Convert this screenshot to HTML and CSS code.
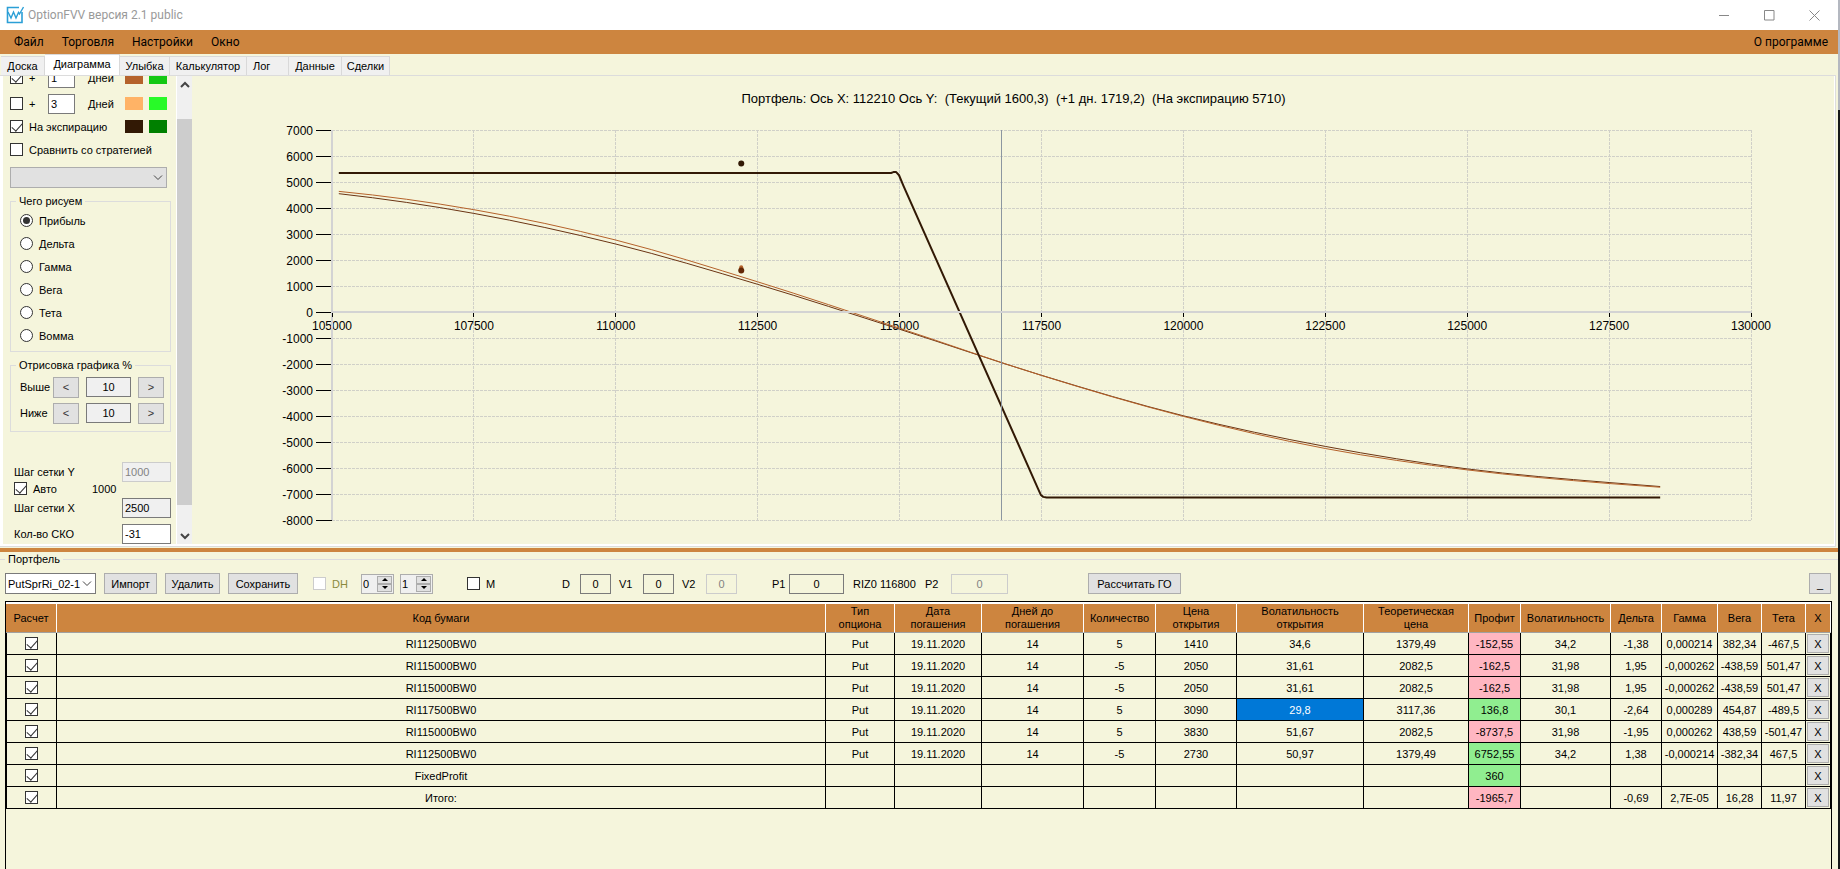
FILE: index.html
```html
<!DOCTYPE html>
<html lang="ru">
<head>
  <meta charset="UTF-8">
  <meta name="viewport" content="width=device-width, initial-scale=1.0">
  <title>OptionFVV версия 2.1 public</title>
  <link rel="stylesheet" href="styles.css">
</head>
<body>
  <div class="window">

    <header class="titlebar">
      <svg class="logo" width="18" height="18" viewBox="0 0 18 18" fill="none" stroke="#2b9fd6">
        <path d="M13 1.5H1.5V16.5H16V6" stroke-width="1.6"/>
        <path d="M2 6L5 12L7.500 6L10 12L12.500 6.500L13.500 8L17.500 1" stroke-width="1.4"/>
      </svg>
      <span class="title">OptionFVV версия 2.1 public</span>
      <div class="win-buttons">
        <button aria-label="Свернуть"><svg width="11" height="11"><path d="M0 5.500H10"/></svg></button>
        <button aria-label="Развернуть"><svg width="11" height="11"><path d="M.5 .5H10V10H.5Z"/></svg></button>
        <button aria-label="Закрыть"><svg width="11" height="11"><path d="M.5 .5L10.500 10.500M10.500 .5L.5 10.500"/></svg></button>
      </div>
    </header>

    <nav class="menu">
      <a href="#">Файл</a>
      <a href="#">Торговля</a>
      <a href="#">Настройки</a>
      <a href="#">Окно</a>
      <a href="#" class="about">О программе</a>
    </nav>

    <div class="tabs">
      <button class="w44">Доска</button>
      <button class="w75 active">Диаграмма</button>
      <button class="w50">Улыбка</button>
      <button class="w77">Калькулятор</button>
      <button class="w42 left">Лог</button>
      <button class="w53">Данные</button>
      <button class="w48">Сделки</button>
    </div>

    <main class="tab-page">
      <aside class="sidebar">
        <div class="options">
          <div class="row first">
            <input type="checkbox" id="plus1" checked><label class="plus" for="plus1">+</label>
            <input type="text" class="days" id="days1" value="1"><label class="days-label" for="days1">Дней</label>
            <i class="swatch c1"></i><i class="swatch c2"></i>
          </div>
          <div class="row">
            <input type="checkbox" id="plus3"><label class="plus" for="plus3">+</label>
            <input type="text" class="days" id="days3" value="3"><label class="days-label" for="days3">Дней</label>
            <i class="swatch c3"></i><i class="swatch c4"></i>
          </div>
          <div class="row">
            <input type="checkbox" id="exp" checked><label class="wide" for="exp">На экспирацию</label>
            <i class="swatch c5"></i><i class="swatch c6"></i>
          </div>
          <div class="row">
            <input type="checkbox" id="cmp"><label for="cmp">Сравнить со стратегией</label>
          </div>
          <div class="select strategy">
            <select aria-label="Стратегия"><option></option></select>
            <svg width="10" height="6"><path d="M1 .5L5 4.500L9 .5"/></svg>
          </div>

          <fieldset class="what">
            <legend>Чего рисуем</legend>
            <label><input type="radio" name="what" checked>Прибыль</label>
            <label><input type="radio" name="what">Дельта</label>
            <label><input type="radio" name="what">Гамма</label>
            <label><input type="radio" name="what">Вега</label>
            <label><input type="radio" name="what">Тета</label>
            <label><input type="radio" name="what">Вомма</label>
          </fieldset>

          <fieldset class="range">
            <legend>Отрисовка графика %</legend>
            <div class="range-row">
              <label for="above">Выше</label><button>&lt;</button><input type="text" id="above" value="10"><button>&gt;</button>
            </div>
            <div class="range-row">
              <label for="below">Ниже</label><button>&lt;</button><input type="text" id="below" value="10"><button>&gt;</button>
            </div>
          </fieldset>

          <div class="steps">
            <div class="step"><label for="stepY">Шаг сетки Y</label><input type="text" id="stepY" value="1000" disabled></div>
            <div class="auto"><input type="checkbox" id="auto" checked><label for="auto">Авто</label><span>1000</span></div>
            <div class="step"><label for="stepX">Шаг сетки X</label><input type="text" class="grey" id="stepX" value="2500"></div>
            <div class="step last"><label for="sko">Кол-во СКО</label><input type="text" id="sko" value="-31"></div>
          </div>
        </div>
        <div class="scrollbar">
          <svg width="10" height="8"><path d="M1 6L5 2L9 6"/></svg>
          <div class="track"><div class="thumb"></div></div>
          <svg width="10" height="8"><path d="M1 2L5 6L9 2"/></svg>
        </div>
      </aside>
      <section class="chart">
        <h1>Портфель: Ось X: 112210 Ось Y: &nbsp;(Текущий 1600,3) &nbsp;(+1 дн. 1719,2) &nbsp;(На экспирацию 5710)</h1>
        <svg id="chart"></svg>
      </section>
    </main>

    <div class="splitter"></div>

    <section class="portfolio">
      <h2>Портфель</h2>
      <div class="toolbar">
        <div class="select strat-name">
          <select aria-label="Портфель"><option>PutSprRi_02-1</option></select>
          <svg width="10" height="6"><path d="M1 .5L5 4.500L9 .5"/></svg>
        </div>
        <button class="w53">Импорт</button>
        <button class="w55">Удалить</button>
        <button class="w70">Сохранить</button>
        <label class="check dh"><input type="checkbox" disabled>DH</label>
        <div class="spin">
          <input type="text" aria-label="DH 1" value="0">
          <span class="arrows"><button aria-label="Больше"></button><button class="down" aria-label="Меньше"></button></span>
        </div>
        <div class="spin">
          <input type="text" aria-label="DH 2" value="1">
          <span class="arrows"><button aria-label="Больше"></button><button class="down" aria-label="Меньше"></button></span>
        </div>
        <label class="check m"><input type="checkbox">M</label>
        <label class="field d">D<input type="text" value="0"></label>
        <label class="field v">V1<input type="text" value="0"></label>
        <label class="field v">V2<input type="text" value="0" disabled></label>
        <label class="field p1">P1<input type="text" value="0"></label>
        <span class="ticker">RIZ0 116800</span>
        <label class="field p2">P2<input type="text" value="0" disabled></label>
        <button class="w93">Рассчитать ГО</button>
        <button class="collapse">_</button>
      </div>

      <div class="grid">
        <table>
          <colgroup>
            <col class="w51"><col><col class="w69"><col class="w87"><col class="w102"><col class="w72"><col class="w81"><col class="w127">
            <col class="w105"><col class="w52"><col class="w90"><col class="w51"><col class="w56"><col class="w44"><col class="w44"><col class="w25">
          </colgroup>
          <thead>
            <tr>
              <th>Расчет</th><th>Код бумаги</th><th>Тип<br>опциона</th><th>Дата<br>погашения</th><th>Дней до<br>погашения</th><th>Количество</th><th>Цена<br>открытия</th><th>Волатильность<br>открытия</th>
              <th>Теоретическая<br>цена</th><th>Профит</th><th>Волатильность</th><th>Дельта</th><th>Гамма</th><th>Вега</th><th>Тета</th><th>X</th>
            </tr>
          </thead>
          <tbody>
            <tr>
              <td><input type="checkbox" aria-label="Расчет" checked></td><td>RI112500BW0</td><td>Put</td><td>19.11.2020</td><td>14</td><td>5</td><td>1410</td><td>34,6</td>
              <td>1379,49</td><td class="minus">-152,55</td><td>34,2</td><td>-1,38</td><td>0,000214</td><td>382,34</td><td>-467,5</td><td><button>X</button></td>
            </tr>
            <tr>
              <td><input type="checkbox" aria-label="Расчет" checked></td><td>RI115000BW0</td><td>Put</td><td>19.11.2020</td><td>14</td><td>-5</td><td>2050</td><td>31,61</td>
              <td>2082,5</td><td class="minus">-162,5</td><td>31,98</td><td>1,95</td><td>-0,000262</td><td>-438,59</td><td>501,47</td><td><button>X</button></td>
            </tr>
            <tr>
              <td><input type="checkbox" aria-label="Расчет" checked></td><td>RI115000BW0</td><td>Put</td><td>19.11.2020</td><td>14</td><td>-5</td><td>2050</td><td>31,61</td>
              <td>2082,5</td><td class="minus">-162,5</td><td>31,98</td><td>1,95</td><td>-0,000262</td><td>-438,59</td><td>501,47</td><td><button>X</button></td>
            </tr>
            <tr>
              <td><input type="checkbox" aria-label="Расчет" checked></td><td>RI117500BW0</td><td>Put</td><td>19.11.2020</td><td>14</td><td>5</td><td>3090</td><td class="selected">29,8</td>
              <td>3117,36</td><td class="profit">136,8</td><td>30,1</td><td>-2,64</td><td>0,000289</td><td>454,87</td><td>-489,5</td><td><button>X</button></td>
            </tr>
            <tr>
              <td><input type="checkbox" aria-label="Расчет" checked></td><td>RI115000BW0</td><td>Put</td><td>19.11.2020</td><td>14</td><td>5</td><td>3830</td><td>51,67</td>
              <td>2082,5</td><td class="minus">-8737,5</td><td>31,98</td><td>-1,95</td><td>0,000262</td><td>438,59</td><td>-501,47</td><td><button>X</button></td>
            </tr>
            <tr>
              <td><input type="checkbox" aria-label="Расчет" checked></td><td>RI112500BW0</td><td>Put</td><td>19.11.2020</td><td>14</td><td>-5</td><td>2730</td><td>50,97</td>
              <td>1379,49</td><td class="profit">6752,55</td><td>34,2</td><td>1,38</td><td>-0,000214</td><td>-382,34</td><td>467,5</td><td><button>X</button></td>
            </tr>
            <tr>
              <td><input type="checkbox" aria-label="Расчет" checked></td><td>FixedProfit</td><td></td><td></td><td></td><td></td><td></td><td></td>
              <td></td><td class="profit">360</td><td></td><td></td><td></td><td></td><td></td><td><button>X</button></td>
            </tr>
            <tr>
              <td><input type="checkbox" aria-label="Расчет" checked></td><td>Итого:</td><td></td><td></td><td></td><td></td><td></td><td></td>
              <td></td><td class="minus">-1965,7</td><td></td><td>-0,69</td><td>2,7E-05</td><td>16,28</td><td>11,97</td><td><button>X</button></td>
            </tr>
          </tbody>
        </table>
      </div>
    </section>
  </div>

  <script src="chart.js"></script>
</body>
</html>
```
FILE: styles.css
```css
* {
  box-sizing: border-box;
}
body {
  margin: 0;
  font-family: "Liberation Sans", Arial, sans-serif;
  font-size: 11px;
  line-height: 14px;
  color: #000;
  background: linear-gradient(#b4b8c0 110px, #15181a 110px);
}
button, input, select {
  font: inherit;
  color: inherit;
  border-radius: 0;
  margin: 0;
  padding: 0;
}
button {
  background: #e1e1e1;
  border: 1px solid #adadad;
  white-space: nowrap;
}
svg {
  fill: none;
}
.window {
  display: flex;
  flex-direction: column;
  height: 100vh;
  margin-right: 2px;
  overflow: hidden;
  background: #f5f5dc;
}

/* title and menu */
.titlebar {
  display: flex;
  align-items: center;
  flex: none;
  height: 30px;
  padding: 0 1px 0 6px;
  background: #fff;
}
.logo {
  margin-right: 4px;
}
.title {
  font-family: Roboto, "Noto Sans", sans-serif;
  font-size: 12px;
  color: #999;
}
.win-buttons {
  display: flex;
  margin-left: auto;
}
.win-buttons button {
  display: flex;
  align-items: center;
  justify-content: center;
  width: 45px;
  height: 28px;
  border: none;
  background: none;
}
.win-buttons path {
  stroke: #888;
}
.menu {
  display: flex;
  align-items: center;
  flex: none;
  gap: 18px;
  height: 24px;
  padding: 0 10px 0 14px;
  background: #cd853f;
  font-family: Roboto, "Noto Sans", sans-serif;
  font-size: 12px;
}
.menu a {
  color: #000;
  text-decoration: none;
}
.about {
  margin-left: auto;
}

/* tabs */
.tabs {
  display: flex;
  align-items: flex-end;
  flex: none;
  height: 21px;
  padding-left: 1px;
}
.tabs button {
  height: 19px;
  background: #f0f0f0;
  border: 1px solid #d9d9d9;
  border-left-width: 0;
  border-bottom: none;
}
.tabs .active {
  height: 21px;
  padding-bottom: 3px;
  background: #fff;
}
.tabs .left {
  text-align: left;
  padding-left: 6px;
}
.tab-page {
  display: flex;
  flex: none;
  height: 472px;
  margin-right: 2px;
  padding-left: 3px;
  border: 1px solid #dcdcdc;
  border-left: none;
  box-shadow: inset 3px -2px #fff, inset -1px 0 #fff;
  padding-bottom: 2px;
}

/* sidebar */
.sidebar {
  display: flex;
  flex: none;
  width: 189px;
  overflow: hidden;
}
.options {
  flex: 1;
  min-width: 0;
  margin-top: -10px;
  padding: 0 5px 0 7px;
}
.row {
  display: flex;
  align-items: center;
  height: 23px;
}
.row.first {
  margin-bottom: 3px;
}
.row label {
  flex: none;
  margin-left: 6px;
  white-space: nowrap;
}
.row .plus {
  width: 19px;
}
.row .days-label {
  width: 37px;
  margin-left: 13px;
}
.row .wide {
  width: 96px;
}
input[type="checkbox"], input[type="radio"] {
  appearance: none;
  position: relative;
  flex: none;
  width: 13px;
  height: 13px;
  border: 1px solid #333;
  background: #fff;
}
input[type="checkbox"]:checked::after {
  content: "";
  position: absolute;
  left: 3px;
  top: 0;
  width: 5px;
  height: 9px;
  border: solid #333;
  border-width: 0 1px 1px 0;
  transform: rotate(42deg);
}
input[type="checkbox"]:disabled {
  border-color: #ccc;
}
input[type="radio"] {
  border-radius: 50%;
}
input[type="radio"]:checked::after {
  content: "";
  position: absolute;
  inset: 2px;
  border-radius: 50%;
  background: #333;
}
input[type="text"] {
  height: 20px;
  padding: 0 2px;
  border: 1px solid #7a7a7a;
  background: #fff;
}
input[type="text"]:disabled {
  border-color: #ccc;
  color: #838383;
}
.row .days {
  flex: none;
  width: 27px;
}
.swatch {
  flex: none;
  width: 18px;
  height: 13px;
  margin-right: 6px;
}
.c1 { background: #b5622b; }
.c2 { background: #14c814; }
.c3 { background: #ffb366; }
.c4 { background: #28fa28; }
.c5 { background: #321905; }
.c6 { background: #008000; }

.select {
  position: relative;
}
.select select {
  appearance: none;
  display: block;
  width: 100%;
  height: 21px;
  padding-left: 2px;
  border: 1px solid #7a7a7a;
  background: #fff;
}
.select svg {
  position: absolute;
  right: 4px;
  top: 8px;
  stroke: #444;
}
.strategy {
  width: 157px;
  margin-top: 6px;
}
.strategy select {
  border-color: #adadad;
  background: #e1e1e1;
}
fieldset {
  min-width: 0;
  margin: 6px 0 0;
  padding: 1px 9px 4px;
  border: 1px solid #dcdcdc;
}
legend {
  margin-left: -4px;
  padding: 0 3px;
}
.what label {
  display: flex;
  align-items: center;
  gap: 6px;
  height: 23px;
}
.range {
  padding: 2px 6px 5px 9px;
}
.range-row {
  display: flex;
  align-items: center;
  height: 26px;
}
.range-row label {
  flex: none;
  width: 33px;
}
.range-row button {
  flex: none;
  width: 26px;
  height: 21px;
  color: #333;
}
.range-row input[type="text"] {
  flex: none;
  width: 45px;
  margin: 0 7px;
  text-align: center;
  background: #f0f0f0;
}
.steps {
  padding: 30px 0 0 4px;
}
.step {
  display: flex;
  align-items: center;
  justify-content: space-between;
}
.step.last {
  margin-top: 6px;
}
.step input {
  width: 49px;
}
.step input:disabled, .step .grey {
  background: #f0f0f0;
}
.auto {
  display: flex;
  align-items: center;
  height: 16px;
  padding-bottom: 3px;
}
.auto label {
  width: 59px;
  margin-left: 6px;
}

.scrollbar {
  display: flex;
  flex-direction: column;
  flex: none;
  align-items: center;
  width: 16px;
  border-left: 1px solid #fff;
  background: #f0f0f0;
}
.scrollbar > svg {
  flex: none;
  margin: 5px 0 4px;
  stroke: #444;
  stroke-width: 2;
}
.track {
  flex: 1;
  width: 100%;
  padding: 26px 0 22px;
}
.thumb {
  height: 100%;
  background: #cdcdcd;
}

/* chart */
.chart {
  flex: 1;
  min-width: 0;
  position: relative;
}
.chart h1 {
  position: absolute;
  left: 0;
  right: 0;
  top: 16px;
  margin: 0;
  font-size: 13px;
  font-weight: normal;
  text-align: center;
}
#chart {
  display: block;
  width: 100%;
  height: 100%;
  font-size: 12px;
}
#chart text {
  fill: #000;
}
.gridline {
  stroke: #d0d0c8;
  stroke-dasharray: 3 1;
}
.tick {
  stroke: #000;
}
.axis {
  stroke: #d3d3d3;
  stroke-width: 2;
}
.price {
  stroke: #8c96a0;
}
.now {
  stroke: #6b3413;
}
.next {
  stroke: #b5622b;
}
.expiry {
  stroke: #321905;
  stroke-width: 2;
  stroke-linejoin: round;
}

.splitter {
  flex: none;
  height: 4px;
  margin-top: 1px;
  background: #cd853f;
}

/* portfolio */
.portfolio {
  display: flex;
  flex-direction: column;
  flex: 1;
  min-height: 0;
}
.portfolio h2 {
  display: flex;
  align-items: center;
  gap: 3px;
  margin: 0;
  font-size: 11px;
  font-weight: normal;
}
.portfolio h2::before, .portfolio h2::after {
  content: "";
  width: 5px;
  height: 1px;
  background: #dcdcdc;
}
.portfolio h2::after {
  flex: 1;
}
.toolbar {
  display: flex;
  align-items: center;
  gap: 8px;
  padding: 7px 7px 7px 5px;
}
.toolbar button {
  height: 21px;
}
.strat-name {
  width: 91px;
}
.check {
  display: flex;
  align-items: center;
  gap: 6px;
}
.dh {
  width: 40px;
  margin-left: 7px;
  color: #8a8a3c;
}
.m {
  width: 29px;
  margin-left: 26px;
}
.spin {
  display: flex;
  align-items: center;
  width: 33px;
  height: 20px;
  padding-right: 1px;
  border: 1px solid #adadad;
  background: #f0f0f0;
}
.dh + .spin {
  margin-right: -2px;
}
.spin input[type="text"] {
  width: 15px;
  height: 16px;
  padding: 0 1px;
  border: none;
  background: none;
}
.arrows {
  display: flex;
  flex-direction: column;
}
.toolbar .arrows button {
  display: flex;
  align-items: center;
  justify-content: center;
  width: 15px;
  height: 8px;
}
.arrows button::before {
  content: "";
  border: 3px solid transparent;
  border-top: none;
  border-bottom-color: #000;
}
.arrows .down::before {
  border-top: 3px solid #000;
  border-bottom: none;
}
.field {
  display: flex;
  align-items: center;
  justify-content: space-between;
  white-space: nowrap;
}
.field input[type="text"] {
  width: 31px;
  text-align: center;
  background: none;
}
.d {
  width: 49px;
  margin-left: 58px;
}
.v {
  width: 55px;
}
.p1 {
  width: 72px;
  margin-left: 27px;
}
.p1 input[type="text"] {
  width: 55px;
}
.ticker {
  width: 64px;
  margin-left: 1px;
  white-space: nowrap;
}
.p2 {
  width: 83px;
}
.p2 input[type="text"] {
  width: 57px;
}
.toolbar .w93 {
  margin-left: 72px;
}
.toolbar .collapse {
  width: 22px;
  margin-left: auto;
}

.grid {
  flex: 1;
  min-height: 0;
  margin: 0 6px 0 5px;
  border: 1px solid #000;
  border-bottom: none;
}
table {
  width: 100%;
  table-layout: fixed;
  border-collapse: separate;
  border-spacing: 0;
}
th, td {
  padding: 0;
  text-align: center;
  vertical-align: middle;
  white-space: nowrap;
}
th {
  height: 31px;
  font-weight: normal;
  line-height: 13px;
  background: #cd853f;
  border-top: 2px solid #fff;
  border-right: 1px solid #fff;
  border-bottom: 1px solid #a0a0a0;
}
td {
  height: 22px;
  border-right: 1px solid #000;
  border-bottom: 1px solid #000;
}
td:first-child {
  border-left: 1px solid #000;
}
td input[type="checkbox"] {
  display: block;
  margin: auto;
}
td button {
  display: block;
  width: 22px;
  height: 19px;
  margin: auto;
}
.minus {
  background: #ffb6c1;
}
.profit {
  background: #90ee90;
}
.selected {
  background: #0078d7;
  color: #fff;
}

.w25 { width: 25px; }
.w42 { width: 42px; }
.w44 { width: 44px; }
.w48 { width: 48px; }
.w50 { width: 50px; }
.w51 { width: 51px; }
.w52 { width: 52px; }
.w53 { width: 53px; }
.w55 { width: 55px; }
.w56 { width: 56px; }
.w69 { width: 69px; }
.w70 { width: 70px; }
.w72 { width: 72px; }
.w75 { width: 75px; }
.w77 { width: 77px; }
.w81 { width: 81px; }
.w87 { width: 87px; }
.w90 { width: 90px; }
.w93 { width: 93px; }
.w102 { width: 102px; }
.w105 { width: 105px; }
.w127 { width: 127px; }
```
FILE: chart.js
```js
const svg = document.getElementById('chart');

const xMin = 105000, xMax = 130000, xStep = 2500;
const yMin = -8000, yMax = 7000, yStep = 1000;
const pad = { left: 140, right: 84, top: 54, bottom: 24 };

const prices = [105120, 107500, 110000, 112500, 115000, 117500, 120000, 122500, 125000, 127500, 128400];
const nowValues = [4551, 3792, 2613, 1064, -663, -2435, -3992, -5170, -6035, -6560, -6713];
const nextValues = [4640, 3935, 2767, 1160, -624, -2440, -4015, -5250, -6073, -6597, -6740];
const expiry = [[105120, 5348], [114850, 5348], [114890, 5380], [114940, 5380], [114990, 5260], [115072, 4832],
  [117440, -6800], [117490, -7040], [117530, -7110], [117590, -7137], [128400, -7137]];

function add(tag, attrs, text) {
  const el = document.createElementNS('http://www.w3.org/2000/svg', tag);
  for (const key in attrs) el.setAttribute(key, attrs[key]);
  if (text !== undefined) el.textContent = text;
  svg.appendChild(el);
}

function draw() {
  svg.innerHTML = '';
  const right = svg.clientWidth - pad.right;
  const bottom = svg.clientHeight - pad.bottom;
  const px = v => pad.left + (v - xMin) / (xMax - xMin) * (right - pad.left);
  const py = v => pad.top + (yMax - v) / (yMax - yMin) * (bottom - pad.top);
  const crisp = v => Math.floor(v) + 0.5;
  const line = (x1, y1, x2, y2, name) => add('line', { x1, y1, x2, y2, class: name });

  for (let v = xMin; v <= xMax; v += xStep) {
    line(crisp(px(v)), pad.top, crisp(px(v)), bottom, 'gridline');
  }
  for (let v = yMin; v <= yMax; v += yStep) {
    line(pad.left, crisp(py(v)), right, crisp(py(v)), 'gridline');
    line(pad.left - 16, crisp(py(v)), pad.left, crisp(py(v)), 'tick');
    add('text', { x: pad.left - 19, y: Math.round(py(v)) + 5, 'text-anchor': 'end' }, v);
  }
  for (let v = xMin; v <= xMax; v += xStep) {
    add('text', { x: px(v), y: Math.round(py(0)) + 18, 'text-anchor': 'middle' }, v);
  }

  // smooth curve through the points
  function curve(values, name) {
    const p = values.map((v, i) => [px(prices[i]), py(v)]);
    const n = p.length;
    const h = [], chord = [], slope = [];
    for (let i = 0; i < n - 1; i++) {
      h[i] = p[i + 1][0] - p[i][0];
      chord[i] = (p[i + 1][1] - p[i][1]) / h[i];
    }
    for (let i = 1; i < n - 1; i++) {
      slope[i] = (chord[i - 1] * h[i] + chord[i] * h[i - 1]) / (h[i - 1] + h[i]);
    }
    slope[0] = 2 * chord[0] - slope[1];
    slope[n - 1] = 2 * chord[n - 2] - slope[n - 2];

    let d = `M${p[0]}`;
    for (let i = 1; i < n; i++) {
      const t = h[i - 1] / 3;
      d += `C${p[i - 1][0] + t},${p[i - 1][1] + slope[i - 1] * t} ${p[i][0] - t},${p[i][1] - slope[i] * t} ${p[i]}`;
    }
    add('path', { d, class: name });
  }
  curve(nowValues, 'now');
  curve(nextValues, 'next');
  add('polyline', { points: expiry.map(p => [px(p[0]), py(p[1])]).join(' '), class: 'expiry' });

  add('circle', { cx: px(112210), cy: py(5710), r: 3, fill: '#321905' });
  add('circle', { cx: px(112210), cy: py(1719), r: 2, fill: '#b5622b' });
  add('circle', { cx: px(112210), cy: py(1600), r: 3, fill: '#642805' });

  line(crisp(px(116800)), pad.top, crisp(px(116800)), bottom, 'price');
  line(pad.left, Math.round(py(0)), right, Math.round(py(0)), 'axis');
  line(pad.left, pad.top, pad.left, bottom, 'axis');
  for (let v = xMin; v <= xMax; v += xStep) {
    line(crisp(px(v)), py(0) + 1, crisp(px(v)), py(0) + 5, 'tick');
  }
}

draw();
window.addEventListener('resize', draw);
```
